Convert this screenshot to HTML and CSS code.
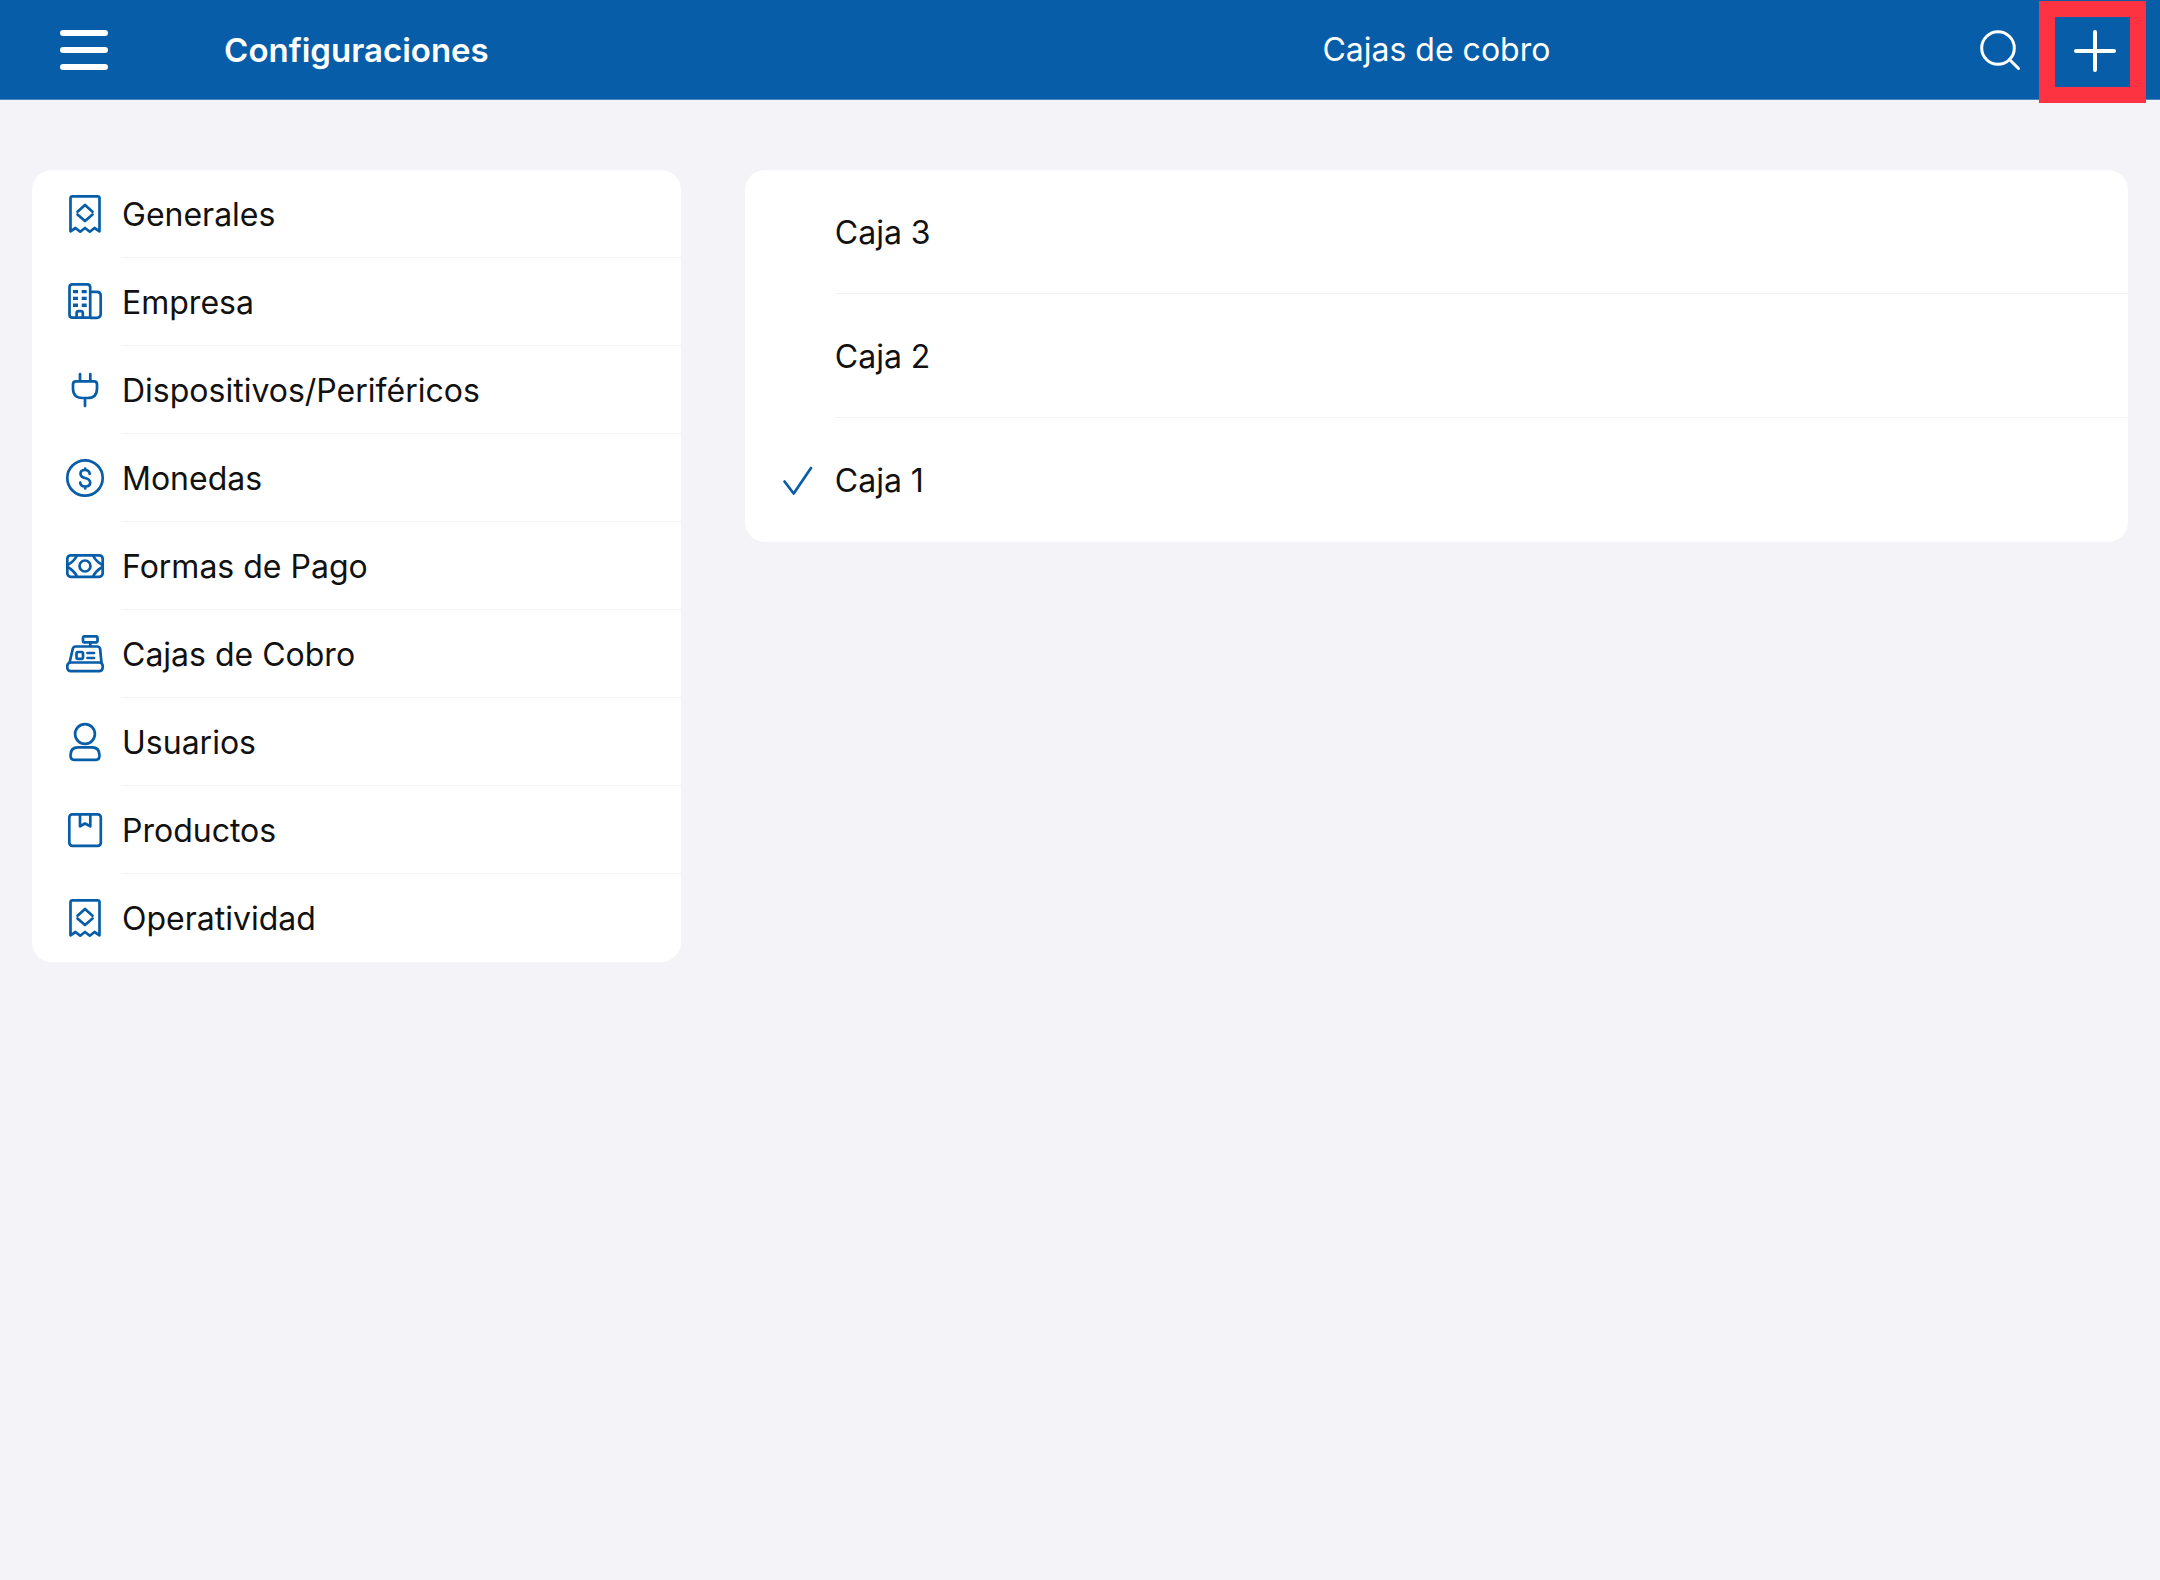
FILE: index.html
```html
<!DOCTYPE html>
<html lang="es">
<head>
  <meta charset="utf-8">
  <meta name="viewport" content="width=device-width, initial-scale=1">
  <title>Configuraciones</title>
  <link rel="stylesheet" href="styles.css">
</head>
<body>
  <header class="topbar">
    <div class="topbar-side">
      <button class="icon-button menu-button" type="button" aria-label="Menú">
        <svg class="menu-icon" viewBox="0 0 48 42" aria-hidden="true"><path d="M3 4h42M3 21h42M3 38h42"/></svg>
      </button>
      <h1 class="topbar-title topbar-title-strong">Configuraciones</h1>
    </div>
    <div class="topbar-main">
      <h2 class="topbar-title">Cajas de cobro</h2>
      <div class="topbar-actions">
        <button class="icon-button" type="button" aria-label="Buscar">
          <svg class="action-icon search-icon" viewBox="0 0 44 44" aria-hidden="true"><circle cx="20" cy="20" r="16.3"/><path d="M31.500 31.500l9 9"/></svg>
        </button>
        <button class="icon-button add-button" type="button" aria-label="Agregar">
          <svg class="action-icon add-icon" viewBox="0 0 44 44" aria-hidden="true"><path d="M22 4v38M3 23h38"/></svg>
        </button>
      </div>
    </div>
  </header>

  <div class="panes">
    <nav class="pane" aria-label="Configuraciones">
      <ul class="card">
        <li class="row"><svg class="icon" viewBox="0 0 42 42" aria-hidden="true"><path d="M6.500 38.300V5.300q0-2 2-2h25q2 0 2 2v33L30.500 35l-4.700 3.700L21 35l-4.800 3.700L11.500 35z"/><path d="M13.500 18.700L21 12l7.500 6.700M13.500 21.500L21 28l7.500-6.500"/></svg><a class="row-label" href="#generales">Generales</a></li>
        <li class="row"><svg class="icon" viewBox="0 0 42 42" aria-hidden="true"><path d="M5.500 6.300q0-3 3-3h14.700q3 0 3 3v30.400H8.500q-3 0-3-3zM26.200 10.800h6.500q4 0 4 4v18q0 4-4 4h-6.500M12.600 36.700v-4.500q0-2 2-2h2.200q2 0 2 2v4.500"/><path class="solid" d="M9 9h5v3.300H9zM17.700 9h5v3.300h-5zM9 15.800h5v3.300H9zM17.700 15.800h5v3.300h-5zM9 22.600h5v3.300H9zM17.700 22.600h5v3.300h-5z"/></svg><a class="row-label" href="#empresa">Empresa</a></li>
        <li class="row"><svg class="icon" viewBox="0 0 42 42" aria-hidden="true"><path d="M12 12.300h18q3 0 3 3v4.200q0 9.500-9.500 9.500h-5Q9 29 9 19.500v-4.200q0-3 3-3zM16 5v7M26.300 5v7M21 29.500V37"/></svg><a class="row-label" href="#dispositivos">Dispositivos/Periféricos</a></li>
        <li class="row"><svg class="icon" viewBox="0 0 42 42" aria-hidden="true"><circle cx="21" cy="21" r="17.700"/><path d="M25.700 16.800q-.5-3.800-4.700-3.800-4.500 0-4.500 3.700 0 3 4.500 4.300 5.200 1.300 5.200 4.700 0 3.800-5 3.800-4.700 0-5-4M21.200 11.500V13M21.200 29.500V31.500"/></svg><a class="row-label" href="#monedas">Monedas</a></li>
        <li class="row"><svg class="icon" viewBox="0 0 42 42" aria-hidden="true"><rect x="3.300" y="10.300" width="35.400" height="21.500" rx="3.500"/><circle cx="21" cy="21" r="5.500"/><path d="M13 10.500Q10 16.500 3.500 20M13 31.500Q10 25.500 3.500 22M29 10.500q3 6 9.500 9.500M29 31.500q3-6 9.500-9.500"/></svg><a class="row-label" href="#pagos">Formas de Pago</a></li>
        <li class="row"><svg class="icon" viewBox="0 0 42 42" aria-hidden="true"><rect x="19" y="3.300" width="14.500" height="6" rx="1.500"/><path d="M26.300 9.300v4M5.500 30L8.700 16q.6-2.500 3-2.500h21.600q2.300 0 2.800 2.500L37.500 30"/><rect x="3.300" y="29.500" width="35.400" height="8.700" rx="3.500"/><rect x="12.500" y="19" width="6.500" height="6.800" rx="1.500"/><path d="M23.500 20h6.500M23.500 25h6.500"/></svg><a class="row-label" href="#cajas" aria-current="page">Cajas de Cobro</a></li>
        <li class="row"><svg class="icon" viewBox="0 0 42 42" aria-hidden="true"><circle cx="21" cy="13" r="9.900"/><path d="M14 26.300h14q7.500 0 7.500 8 0 4.500-3.500 4.500H10q-3.500 0-3.500-4.500 0-8 7.500-8z"/></svg><a class="row-label" href="#usuarios">Usuarios</a></li>
        <li class="row"><svg class="icon" viewBox="0 0 42 42" aria-hidden="true"><rect x="5.300" y="5.300" width="31.500" height="31.500" rx="3"/><path d="M16 5.300v12l5-2.800 5.300 2.800v-12"/></svg><a class="row-label" href="#productos">Productos</a></li>
        <li class="row"><svg class="icon" viewBox="0 0 42 42" aria-hidden="true"><path d="M6.500 38.300V5.300q0-2 2-2h25q2 0 2 2v33L30.500 35l-4.700 3.700L21 35l-4.800 3.700L11.500 35z"/><path d="M13.500 18.700L21 12l7.500 6.700M13.500 21.500L21 28l7.500-6.500"/></svg><a class="row-label" href="#operatividad">Operatividad</a></li>
      </ul>
    </nav>

    <main class="pane">
      <ul class="card card-tall">
        <li class="row"><span class="icon"></span><a class="row-label" href="#caja-3">Caja 3</a></li>
        <li class="row"><span class="icon"></span><a class="row-label" href="#caja-2">Caja 2</a></li>
        <li class="row"><svg class="icon" viewBox="0 0 42 42" role="img" aria-label="Seleccionada"><path d="M7.500 22.500L16.700 34.500 34 9"/></svg><a class="row-label" href="#caja-1">Caja 1</a></li>
      </ul>
    </main>
  </div>
</body>
</html>
```
FILE: styles.css
```css
* {
  box-sizing: border-box;
}

body {
  margin: 0;
  min-height: 100vh;
  background: #f3f3f8;
  color: #111;
  font-family: Inter, "Liberation Sans", sans-serif;
  font-size: 32px;
  line-height: 40px;
}

.topbar,
.panes {
  display: grid;
  grid-template-columns: 33fr 67fr;
}

.topbar {
  height: 100px;
  border-bottom: 1px solid #4a84bb;
  background: #085da8;
  color: #fff;
}

.topbar-side,
.topbar-main {
  display: grid;
  grid-template-columns: 1fr auto 1fr;
  align-items: center;
}

.topbar-side {
  padding: 1px 60px 0;
}

.topbar-main {
  padding: 1px 43px 0;
}

.topbar-side::after,
.topbar-main::before {
  content: "";
}

.topbar-title {
  margin: 0;
  font-size: 32px;
  font-weight: 400;
  line-height: 42px;
}

.topbar-title-strong {
  font-size: 33px;
  font-weight: 600;
}

.topbar-actions {
  display: flex;
  justify-content: flex-end;
  gap: 51px;
}

.icon-button {
  display: flex;
  position: relative;
  padding: 0;
  border: 0;
  background: none;
  color: inherit;
  cursor: pointer;
}

.menu-button {
  justify-self: start;
}

.menu-icon,
.action-icon {
  fill: none;
  stroke: currentColor;
  stroke-linecap: round;
}

.menu-icon {
  width: 48px;
  height: 42px;
  stroke-width: 6;
}

.action-icon {
  width: 44px;
  height: 44px;
}

.search-icon {
  stroke-width: 3;
}

.add-icon {
  stroke-width: 4;
}

/* Highlight frame around the add button */
.add-button::after {
  content: "";
  position: absolute;
  inset: -27px -29px -31px -34px;
  border: 16px solid #fd3341;
}

.pane {
  padding: 70px 32px 32px;
}

.card {
  margin: 0;
  padding: 0;
  overflow: hidden;
  border-radius: 20px;
  background: #fff;
  list-style: none;
}

.row {
  display: flex;
  align-items: center;
  gap: 16px;
  padding-left: 32px;
}

.icon {
  flex: none;
  width: 42px;
  height: 42px;
  fill: none;
  stroke: #085da8;
  stroke-width: 2.7;
  stroke-linecap: round;
  stroke-linejoin: round;
}

.solid {
  fill: #085da8;
  stroke: none;
}

.row-label {
  flex: 1;
  padding: 25px 0 23px;
  color: inherit;
  text-decoration: none;
}

.card-tall .row-label {
  padding: 43px 0 41px;
}

.row:not(:last-child) .row-label {
  box-shadow: inset 0 -1px #f2f2f5;
}
```
